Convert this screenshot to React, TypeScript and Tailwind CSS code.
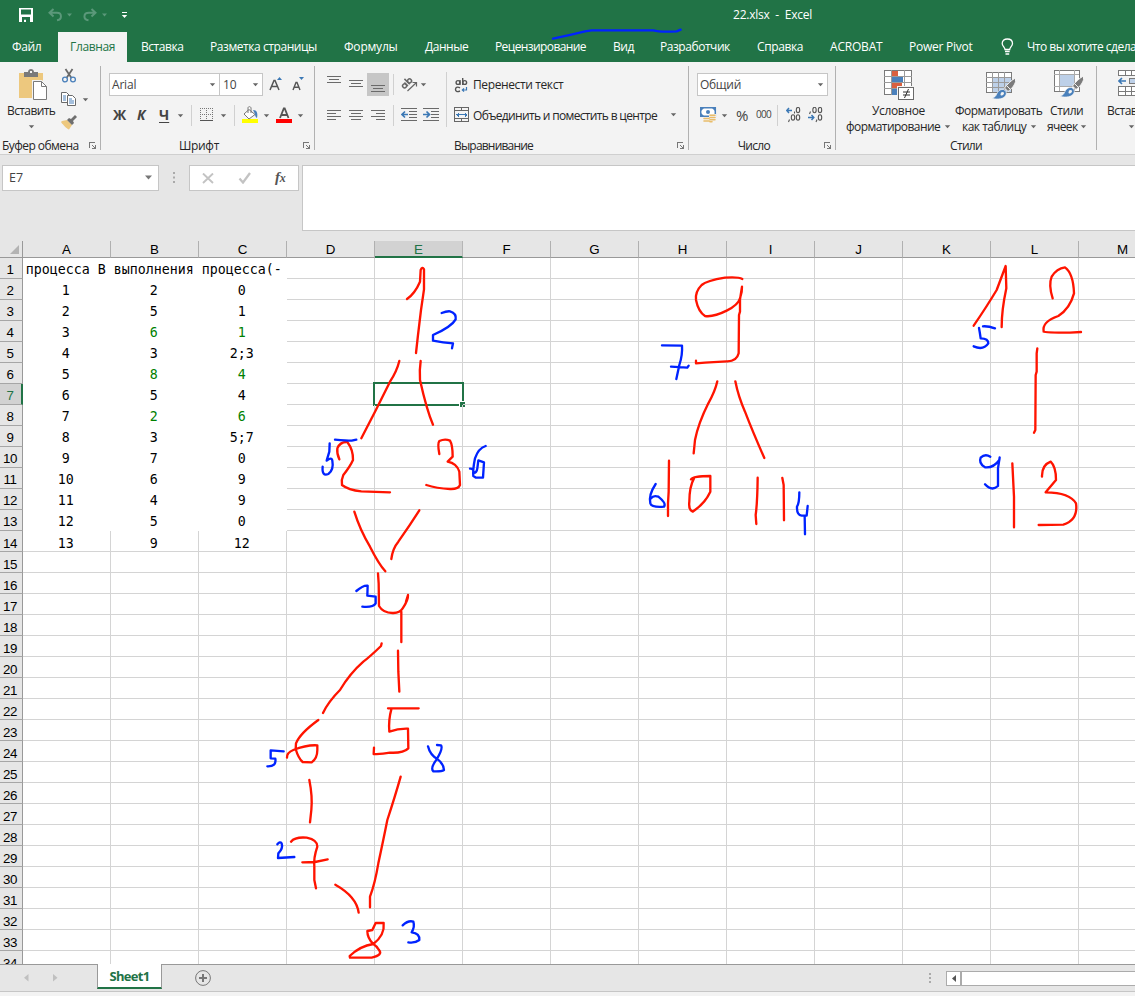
import React from "react";

const COLS = ["A", "B", "C", "D", "E", "F", "G", "H", "I", "J", "K", "L", "M"];

const DATA: string[][] = [
  ["процесса В", "выполнения", "процесса(-"],
  ["1", "2", "0"],
  ["2", "5", "1"],
  ["3", "6", "1"],
  ["4", "3", "2;3"],
  ["5", "8", "4"],
  ["6", "5", "4"],
  ["7", "2", "6"],
  ["8", "3", "5;7"],
  ["9", "7", "0"],
  ["10", "6", "9"],
  ["11", "4", "9"],
  ["12", "5", "0"],
  ["13", "9", "12"],
];

const GREEN_ROWS = [4, 6, 8];

const Caret = ({ className = "" }: { className?: string }) => (
  <svg width="7" height="4" viewBox="0 0 7 4" className={`shrink-0 ${className}`}>
    <path d="M.8 .3h5.4L3.5 3.3z" fill="#666" />
  </svg>
);

const Launcher = () => (
  <svg width="8" height="8" viewBox="0 0 8 8" className="shrink-0" shapeRendering="crispEdges">
    <path d="M.5 6V.5H6" fill="none" stroke="#777" />
    <path d="M3 3h1v1h1v1h1V3h1v4H3V6h2V5H4V4H3z" fill="#777" />
  </svg>
);

const GroupLine = () => <div className="mt-1 h-[84px] w-px shrink-0 bg-[#b1b1b1]" />;

const Tick = ({ className = "" }: { className?: string }) => (
  <div className={`h-[21px] w-px shrink-0 bg-[#d0d0d0] ${className}`} />
);

const Lines = ({ kind, rows }: { kind: "l" | "c" | "r"; rows: number }) => {
  const short = kind === "l" ? "M0 3.5h9" : kind === "r" ? "M5 3.5h9" : "M2 3.5h10";
  const short2 = kind === "l" ? "M0 9.500h9" : kind === "r" ? "M5 9.500h9" : "M2 9.500h10";
  return (
    <svg width="14" height="10" viewBox="0 0 14 10" shapeRendering="crispEdges" className="shrink-0" fill="none" stroke="#6a6a6a">
      <path d="M0 .5h14M0 6.500h14" />
      <path d={short} />
      {rows === 4 && <path d={short2} />}
    </svg>
  );
};

const Indent = ({ right }: { right?: boolean }) => (
  <svg width="17" height="13" viewBox="0 0 17 13" className="shrink-0" fill="none">
    <path d="M0 .5h16M8 3.500h8M8 6.500h8M8 9.500h8M0 12.500h16" stroke="#6a6a6a" shapeRendering="crispEdges" />
    {right ? (
      <path d="M0 6.500h6M3.500 3.500l3 3-3 3" stroke="#3b78b5" strokeWidth="1.700" />
    ) : (
      <path d="M7 6.500H1M4 3.500l-3 3 3 3" stroke="#3b78b5" strokeWidth="1.700" />
    )}
  </svg>
);

const Brush = () => (
  <>
    <path d="M29.500 8c-4 2-9 7-11 10l3.500 3.500c4-3 7-7 7.500-10z" fill="#7b7b7b" stroke="#f3f3f3" />
    <path d="M20.500 15.500l4 4" stroke="#f3f3f3" strokeWidth="1" />
    <path d="M17.500 19.500c-4-.5-6 2.500-7 5-.6 1.500-2 3-4.500 3.700 6 1.800 12 .8 14-3.200 1-2.500-.3-4.700-2.500-5.500z" fill="#4a80bb" stroke="#f3f3f3" strokeWidth=".7" />
    <path d="M15 22.500c2-1.500 4 0 2.500 2-1 1.300-3 1.500-3 0z" fill="#f3f3f3" />
  </>
);

function TitleBar() {
  return (
    <div className="flex h-8 items-center text-[12px] text-white">
      <svg width="14" height="14" viewBox="0 0 14 14" className="ml-[19px] mt-[-2px]">
        <path fillRule="evenodd" fill="#fff" d="M0 0h14v14H0zM2 1.500v5h10v-5zM3 9v5h2v-2.300h2V14h4V9z" />
      </svg>
      <svg width="24" height="14" viewBox="0 0 24 14" className="ml-[15px] mt-[-2px]" fill="none" stroke="#5b987a" strokeWidth="2">
        <path d="M5.500 1L1.500 4.800l4 3.700M1.500 4.800H9c5 0 5.500 6.500 0 7.500" />
        <path d="M19 5.500h5l-2.500 3z" fill="#5b987a" stroke="none" />
      </svg>
      <svg width="24" height="14" viewBox="0 0 24 14" className="ml-[11px] mt-[-2px]" fill="none" stroke="#5b987a" strokeWidth="2">
        <path d="M8.500 1l4 3.800-4 3.700M12.500 4.800H6C0 4.800 0 11.500 5.500 12.300" />
        <path d="M19 5.500h5l-2.500 3z" fill="#5b987a" stroke="none" />
      </svg>
      <svg width="7" height="8" viewBox="0 0 7 8" className="ml-[14px] mt-[-1px]">
        <path d="M1 .5h5" stroke="#fff" />
        <path d="M.8 3h5.400L3.500 6z" fill="#fff" />
      </svg>
      <span className="ml-[605px] whitespace-pre pb-[2px] text-[12px] tracking-[-0.23px]">22.xlsx  -  Excel</span>
    </div>
  );
}

const TABS: [string, string, string][] = [
  ["Файл", "w-[58px] pl-3 tracking-[-0.4px]", "text-white"],
  ["Главная", "w-[69px] pl-3 bg-[#f3f3f3] tracking-[-0.35px]", "text-[#217346]"],
  ["Вставка", "w-[69px] pl-[14px] tracking-[-0.45px]", "text-white"],
  ["Разметка страницы", "w-[134px] pl-[14px] tracking-[-0.43px]", "text-white"],
  ["Формулы", "w-[80px] pl-[14px] tracking-[-0.2px]", "text-white"],
  ["Данные", "w-[71px] pl-[15px] tracking-[-0.45px]", "text-white"],
  ["Рецензирование", "w-[118px] pl-[14px] tracking-[-0.6px]", "text-white"],
  ["Вид", "w-[47px] pl-[14px] tracking-[-0.4px]", "text-white"],
  ["Разработчик", "w-[97px] pl-[14px] tracking-[-0.45px]", "text-white"],
  ["Справка", "w-[73px] pl-[14px] tracking-[-0.4px]", "text-white"],
  ["ACROBAT", "w-[79px] pl-[14px] tracking-[-0.2px]", "text-white"],
  ["Power Pivot", "w-[106px] pl-[14px] tracking-[-0.25px]", "text-white"],
];

function Tabs() {
  return (
    <div className="flex h-[30px] text-[12px]">
      {TABS.map(([t, box, color]) => (
        <div key={t} className={`flex shrink-0 items-center whitespace-nowrap ${box} ${color}`}>
          {t}
        </div>
      ))}
      <svg width="13" height="18" viewBox="0 0 13 18" className="mt-[6px] shrink-0" fill="none" stroke="#fff">
        <path d="M4 11.500c0-2-2.800-3.300-2.800-6C1.200 2.500 3.500 1 6.300 1s5.200 1.500 5.200 4.500c0 2.700-2.800 4-2.800 6zM4 13.500h4.700M4.500 16h3.700" strokeWidth="1.300" />
      </svg>
      <span className="ml-[13px] flex shrink-0 items-center whitespace-nowrap tracking-[-0.5px] text-white">Что вы хотите сделать?</span>
    </div>
  );
}

function Clipboard() {
  return (
    <div className="w-[100px] shrink-0">
      <div className="flex h-[75px]">
        <div className="flex w-[60px] shrink-0 flex-col pt-[7px]">
          <svg width="30" height="32" viewBox="0 0 30 32" className="ml-[19px]">
            <path d="M0 4h24v25H0z" fill="#edc87e" />
            <path d="M5 3h4c0-4 6-4 6 0h4v5H5z" fill="#7a7a7a" />
            <path d="M11 2h2v2h-2z" fill="#f3f3f3" />
            <path d="M13 11h10l6 6v15H13z" fill="#f3f3f3" />
            <path d="M14.500 12.500h8l5 5v13h-13z" fill="#fff" stroke="#7a7a7a" />
            <path d="M22.500 12.500v5h5" fill="none" stroke="#7a7a7a" />
          </svg>
          <span className="ml-[7px] mt-[2px] whitespace-nowrap leading-4 tracking-[-0.6px]">Вставить</span>
          <Caret className="ml-7 mt-[6px]" />
        </div>
        <div className="flex flex-col pt-[6px]">
          <svg width="16" height="15" viewBox="0 0 16 15" className="ml-[1px]">
            <path d="M4.500 1l6 9M11.500 1l-6 9" stroke="#6a6a6a" strokeWidth="1.800" />
            <circle cx="4" cy="11.500" r="2.400" fill="none" stroke="#4a80bb" strokeWidth="1.300" />
            <circle cx="12" cy="11.500" r="2.400" fill="none" stroke="#4a80bb" strokeWidth="1.300" />
          </svg>
          <div className="mt-[9px] flex items-center">
            <svg width="17" height="15" viewBox="0 0 17 15" fill="#fff" stroke="#6a6a6a">
              <path d="M1.500 .5h5l3 3v7h-8z" />
              <path d="M3 4h3M3 6h3M3 8h3" stroke="#4a80bb" />
              <path d="M7.500 3.500h5l3 3v7h-8z" />
              <path d="M9 7h3M9 9h5M9 11h5" stroke="#4a80bb" />
            </svg>
            <Caret className="ml-[5px]" />
          </div>
          <svg width="17" height="15" viewBox="0 0 17 15" className="mt-2">
            <path d="M2 6l5-1 5 5-3 4.500C7 14 3 10 1 7z" fill="#edc87e" />
            <path d="M7 5l2-2 2 1 4-4 2 2-4 4 1 2-2 2z" fill="#6f6f6f" />
          </svg>
        </div>
      </div>
      <div className="flex h-[18px] items-center justify-between pl-[2px] pr-[3px]">
        <span className="whitespace-nowrap tracking-[-0.55px]">Буфер обмена</span>
        <Launcher />
      </div>
    </div>
  );
}

function FontGroup() {
  return (
    <div className="w-[213px] shrink-0">
      <div className="flex h-[34px] pl-2 pt-[11px]">
        <div className="flex h-[23px] w-[111px] shrink-0 items-center justify-between border border-[#c6c6c6] bg-white pl-[2px] pr-[3px] tracking-[-0.2px] text-[#444]">
          Arial
          <Caret />
        </div>
        <div className="flex h-[23px] w-[43px] shrink-0 items-center justify-between border border-l-0 border-[#c6c6c6] bg-white pl-[3px] pr-[3px] text-[#444]">
          10
          <Caret />
        </div>
        <svg width="36" height="22" viewBox="0 0 36 22" className="ml-[6px] mt-px">
          <path d="M1 16L5 6.500h1L10 16M2.500 12.500h6" fill="none" stroke="#555" strokeWidth="1.500" />
          <path d="M8 6h5l-2.500-3z" fill="#3b78b5" />
          <path d="M24 16l3-7.500h1L31 16M25 13.300h5" fill="none" stroke="#555" strokeWidth="1.400" />
          <path d="M30 3h5l-2.500 3z" fill="#3b78b5" />
        </svg>
      </div>
      <div className="mt-[9px] flex h-8 items-start">
        <div className="flex h-[21px] items-center text-[14px] font-bold leading-5 text-[#444]">
          <span className="-mt-[2px] ml-3 w-6">Ж</span>
          <span className="-mt-[2px] w-[22px] italic">К</span>
          <span className="-mt-[2px] w-[18px] underline underline-offset-2">Ч</span>
          <Caret />
          <Tick className="ml-[7px]" />
        </div>
        <svg width="14" height="14" viewBox="0 0 14 14" className="ml-2 mt-[3px]" stroke="#777" shapeRendering="crispEdges">
          <path d="M0 .5h13M0 6.500h13M.5 0v12M6.500 0v12M12.500 0v12" strokeDasharray="1 1" />
          <path d="M0 12.500h13" stroke="#555" />
        </svg>
        <Caret className="ml-[6px] mt-[9px]" />
        <Tick className="ml-[7px]" />
        <svg width="17" height="18" viewBox="0 0 17 18" className="ml-[7px] mt-px">
          <path d="M0 13h16v4H0z" fill="#ff0" />
          <path d="M7 3.500l6 5-6 4.500-5-5zM6 7V2c0-2 3-1.500 3 0v5" fill="#fff" stroke="#777" />
          <path d="M11 4c4 0 5 3 4 8-2-1-2-4-2-4z" fill="#4a80bb" />
        </svg>
        <Caret className="ml-1 mt-[9px]" />
        <svg width="17" height="18" viewBox="0 0 17 18" className="ml-[6px] mt-px">
          <path d="M0 13h16v4H0z" fill="#f00" />
          <path d="M4 12L7.800 2.500h.9l3.800 9.500M5.500 9h5.500" fill="none" stroke="#555" strokeWidth="1.800" />
        </svg>
        <Caret className="ml-1 mt-[9px]" />
      </div>
      <div className="flex h-[18px] items-center justify-end pr-[3px]">
        <span className="mr-[84px] whitespace-nowrap tracking-[-0.3px]">Шрифт</span>
        <Launcher />
      </div>
    </div>
  );
}

function AlignGroup() {
  return (
    <div className="w-[373px] shrink-0">
      <div className="flex h-[75px]">
        <div className="w-[131px] shrink-0">
          <div className="flex h-[34px] items-start pt-[11px]">
            <div className="ml-3 mt-[3px]"><Lines kind="c" rows={3} /></div>
            <div className="ml-2 mt-[7px]"><Lines kind="c" rows={3} /></div>
            <div className="ml-1 flex h-[23px] w-[22px] justify-center bg-[#c6c6c6] pt-3"><Lines kind="c" rows={3} /></div>
            <Tick className="ml-1 mt-px" />
            <svg width="17" height="16" viewBox="0 0 17 16" className="ml-[7px] mt-[3px]" fill="none" stroke="#666">
              <g strokeWidth="1.500" transform="rotate(-45 5 7)">
                <circle cx="2" cy="8" r="2" />
                <path d="M4.300 5.500v5M6.800 3v7.500" />
                <circle cx="9" cy="8" r="2" />
              </g>
              <path d="M6.500 15l9-8.500M11.500 6.500h4v4" strokeWidth="1.200" />
            </svg>
            <Caret className="ml-[2px] mt-[10px]" />
          </div>
          <div className="flex items-start pt-[9px]">
            <div className="ml-3 mt-[5px]"><Lines kind="l" rows={4} /></div>
            <div className="ml-2 mt-[5px]"><Lines kind="c" rows={4} /></div>
            <div className="ml-2 mt-[5px]"><Lines kind="r" rows={4} /></div>
            <Tick className="ml-2" />
            <div className="ml-[7px] mt-[3px] flex gap-[5px]"><Indent /><Indent right /></div>
          </div>
        </div>
        <div className="mt-[10px] h-[55px] w-px shrink-0 bg-[#d0d0d0]" />
        <div className="pl-[7px]">
          <div className="mt-[12px] flex h-[22px] items-center">
            <svg width="15" height="16" viewBox="0 0 15 16" fill="none" stroke="#555" strokeWidth="1.400">
              <circle cx="4" cy="5.500" r="1.900" /><path d="M6 3v5M8.700 1v7" /><circle cx="10.700" cy="5.500" r="1.900" />
              <path d="M6 10.800c-3-1.500-4.500 0-4.500 1.700S3 15.300 6 14" />
              <path d="M12.500 10v3H8.500M10 11.300L8.300 13l1.700 1.700" stroke="#3b78b5" strokeWidth="1.200" />
            </svg>
            <span className="ml-1 whitespace-nowrap tracking-[-0.38px]">Перенести текст</span>
          </div>
          <div className="mt-[8px] flex h-[22px] items-center">
            <svg width="16" height="16" viewBox="0 0 16 16" fill="none" stroke="#666" shapeRendering="crispEdges" className="shrink-0">
              <path d="M.5 .5h14v14H.5zM0 3.500h15M0 11.500h15M7.500 0v3M7.500 12v3" />
              <path d="M2 7.500h11M4 5.500v4M11 5.500v4M3 6.500v2M12 6.500v2" stroke="#3b78b5" />
            </svg>
            <span className="ml-[3px] w-[197px] shrink-0 whitespace-nowrap pt-[2px] tracking-[-0.66px]">Объединить и поместить в центре</span>
            <Caret />
          </div>
        </div>
      </div>
      <div className="flex h-[18px] items-center justify-end pr-[3px]">
        <span className="mr-[144px] whitespace-nowrap tracking-[-0.8px]">Выравнивание</span>
        <Launcher />
      </div>
    </div>
  );
}

function NumberGroup() {
  return (
    <div className="w-[146px] shrink-0">
      <div className="flex h-[34px] pl-2 pt-[11px]">
        <div className="flex h-[23px] w-[131px] items-center justify-between border border-[#c6c6c6] bg-white pl-[2px] pr-[3px] tracking-[-0.3px] text-[#444]">
          Общий
          <Caret />
        </div>
      </div>
      <div className="mt-[9px] flex h-8 items-start">
        <svg width="17" height="16" viewBox="0 0 17 16" className="ml-[11px] mt-[2px]">
          <path d="M.7 .7h14.600v8.600H.7z" fill="#fff" stroke="#4a80bb" strokeWidth="1.500" />
          <path d="M1 1h3L1 4zM15 1h-3l3 3zM1 9h3L1 6z" fill="#4a80bb" />
          <circle cx="8" cy="5" r="2" fill="#4a80bb" />
          <path d="M9 7h7v8H4v-5h5z" fill="#f3f3f3" />
          <path d="M10 8.200h5M10 10.500h5M10 12.800h5M4 11.500h5M4 14h5M10 14.800h2" stroke="#e9bd6b" strokeWidth="1.600" strokeLinecap="round" />
        </svg>
        <Caret className="ml-1 mt-[9px]" />
        <span className="ml-[8px] w-[20px] text-[15px] leading-[20px] text-[#444]">%</span>
        <span className="w-[21px] text-[10px] font-medium leading-[19px] tracking-[-0.7px] text-[#444]">000</span>
        <Tick />
        <svg width="38" height="17" viewBox="0 0 38 17" className="ml-[8px] mt-[2px]" fill="none" stroke="#555" strokeWidth="1.100">
          <path d="M6 3.500H.8M3 1L.7 3.500 3 6" stroke="#3b78b5" strokeWidth="1.500" />
          <path d="M8.500 4.500v2" /><ellipse cx="12" cy="3" rx="1.700" ry="2.700" />
          <path d="M3.500 12.500L2.500 15" /><ellipse cx="7" cy="10.500" rx="1.700" ry="2.700" /><ellipse cx="12" cy="10.500" rx="1.700" ry="2.700" />
          <path d="M24.500 4.500L23.500 7" /><ellipse cx="28.500" cy="3" rx="1.700" ry="2.700" /><ellipse cx="34" cy="3" rx="1.700" ry="2.700" />
          <path d="M22 10.500h5.500M25.500 8l2.300 2.500-2.300 2.500" stroke="#3b78b5" strokeWidth="1.500" />
          <path d="M31 12.500L30 15" /><ellipse cx="34" cy="10.500" rx="1.700" ry="2.700" />
        </svg>
      </div>
      <div className="flex h-[18px] items-center justify-end pr-[3px]">
        <span className="mr-[54px] whitespace-nowrap tracking-[-0.7px]">Число</span>
        <Launcher />
      </div>
    </div>
  );
}

function StylesGroup() {
  return (
    <div className="w-[260px] shrink-0">
      <div className="flex h-[75px] pt-[8px]">
        <div className="ml-[10px] flex w-[110px] flex-col">
          <svg width="31" height="31" viewBox="0 0 31 31" className="ml-[38px]" shapeRendering="crispEdges">
            <path d="M.5 .5h27v24H.5z" fill="#fff" stroke="#7a7a7a" />
            <path d="M8 1h6v6H8zM8 13h10v5H8z" fill="#d9603f" />
            <path d="M8 7h11v5H8zM8 19h5v6H8z" fill="#4a80bb" />
            <path d="M0 6.500h28M0 12.500h28M0 18.500h28M7.500 0v25M20.500 0v25" fill="none" stroke="#9a9a9a" />
            <path d="M13 16h18v15H13z" fill="#f3f3f3" />
            <path d="M14.500 17.500h15v12h-15z" fill="#fff" stroke="#6a6a6a" />
            <path d="M19 22h7M19 25h7M24.500 19l-4 9" fill="none" stroke="#333" shapeRendering="auto" />
          </svg>
          <span className="ml-[26px] mt-[2px] whitespace-nowrap leading-4 tracking-[-0.35px]">Условное</span>
          <div className="flex items-center leading-4"><span className="w-[98px] shrink-0 whitespace-nowrap tracking-[-0.55px]">форматирование</span><Caret /></div>
        </div>
        <div className="-ml-[2px] flex w-[92px] flex-col">
          <svg width="31" height="31" viewBox="0 0 31 31" className="ml-8">
            <g shapeRendering="crispEdges">
              <path d="M.5 2.500h25v20H.5z" fill="#fff" stroke="#7a7a7a" />
              <path d="M7 8h18v14H7z" fill="#bdd0e8" />
              <path d="M0 7.500h25M0 12.500h25M0 17.500h25M6.500 2v20M12.500 2v20M18.500 2v20" fill="none" stroke="#9a9a9a" />
            </g>
            <Brush />
          </svg>
          <span className="ml-[1px] mt-[2px] whitespace-nowrap leading-4 tracking-[-0.5px]">Форматировать</span>
          <div className="ml-[8px] flex items-center leading-4"><span className="w-[68px] shrink-0 whitespace-nowrap tracking-[-0.5px]">как таблицу</span><Caret /></div>
        </div>
        <div className="flex w-[50px] flex-col">
          <svg width="31" height="31" viewBox="0 0 31 31" className="ml-[8px]">
            <g shapeRendering="crispEdges">
              <path d="M.5 .5h25v21H.5z" fill="#fff" stroke="#7a7a7a" />
              <path d="M6 5h14v11H6z" fill="#bdd0e8" />
              <path d="M0 4.500h25M0 16.500h25M5.500 0v21M20.500 0v21" fill="none" stroke="#aaa" />
            </g>
            <g transform="translate(0 -2)"><Brush /></g>
          </svg>
          <span className="ml-1 mt-[2px] whitespace-nowrap leading-4 tracking-[-0.4px]">Стили</span>
          <div className="ml-[1px] flex items-center leading-4"><span className="w-[33px] shrink-0 whitespace-nowrap tracking-[-0.6px]">ячеек</span><Caret /></div>
        </div>
      </div>
      <div className="flex h-[18px] items-center justify-center tracking-[-0.7px]"><span>Стили</span></div>
    </div>
  );
}

function InsertGroup() {
  return (
    <div className="flex w-[80px] shrink-0 flex-col pt-[8px]">
      <svg width="30" height="31" viewBox="0 0 30 31" className="ml-[21px]" shapeRendering="crispEdges">
        <path d="M.5 .5h26v5H.5zM.5 16.500h26v9H.5zM0 21.500h27M7.500 0v5M20.500 0v5M13.500 0v5M7.500 16v10M13.500 16v10" fill="#fff" stroke="#7a7a7a" />
        <path d="M11.500 8.500h15v5h-15z" fill="#bdd0e8" stroke="#7a7a7a" />
        <path d="M8 11H1.500M4 8l-3 3 3 3" fill="none" stroke="#3b78b5" strokeWidth="1.600" shapeRendering="auto" />
      </svg>
      <span className="ml-[10px] mt-[2px] whitespace-nowrap leading-4 tracking-[-0.5px]">Вставить</span>
      <Caret className="ml-[31px] mt-[6px]" />
    </div>
  );
}

function FormulaBar() {
  return (
    <div className="flex h-[86px] bg-[#e6e6e6] pt-[10px] text-[12px] text-[#444]">
      <div className="ml-[2px] flex h-[26px] w-[157px] shrink-0 items-center justify-between border border-[#c6c6c6] bg-white pl-[6px] pr-[5px] text-[12.5px]">
        E7
        <svg width="9" height="5" viewBox="0 0 9 5" className="-mt-[2px]"><path d="M1 .5h7L4.500 4.500z" fill="#777" /></svg>
      </div>
      <svg width="2" height="12" viewBox="0 0 2 12" className="ml-[14px] mt-[7px]"><path d="M0 1h2M0 5.500h2M0 10h2" stroke="#aaa" strokeWidth="2" /></svg>
      <div className="ml-[14px] flex h-[26px] w-[110px] shrink-0 items-center border border-[#c6c6c6] bg-white">
        <svg width="12" height="11" viewBox="0 0 12 11" className="ml-3"><path d="M1 .5l10 9.500M11 .5L1 10" stroke="#c3c3c3" strokeWidth="1.900" /></svg>
        <svg width="14" height="12" viewBox="0 0 14 12" className="ml-6"><path d="M1.500 6.500L5 10.500 12 1" fill="none" stroke="#c3c3c3" strokeWidth="2.300" /></svg>
        <span className="ml-[23px] pb-[2px] font-['Liberation_Serif',serif] text-[15px] font-bold italic leading-4 tracking-[-0.2px] text-[#555]">f<span className="text-[12px]">x</span></span>
      </div>
      <div className="ml-[3px] h-[66px] flex-1 border border-r-0 border-[#c6c6c6] bg-white" />
    </div>
  );
}

function Sheet() {
  return (
    <div className="h-[723px] w-full overflow-hidden bg-white font-['Liberation_Sans',Arial,sans-serif] text-[13.33px] text-black">
      <div className="flex h-[17px] w-[1167px] bg-[#e6e6e6]">
        <div className="flex h-[17px] w-[23px] items-end justify-end border-b border-r border-[#999] pb-[3px] pr-[3px]">
          <svg width="9" height="9" viewBox="0 0 9 9"><path d="M9 0v9H0z" fill="#b3b3b3" /></svg>
        </div>
        {COLS.map((c) =>
          c === "E" ? (
            <div key={c} className="flex h-[17px] w-[88px] items-center justify-center border-b-2 border-r border-b-[#217346] border-r-[#b5b5b5] bg-[#d2d2d2] pt-[2px] text-[#217346]">{c}</div>
          ) : (
            <div key={c} className="flex h-[17px] w-[88px] items-center justify-center border-b border-r border-b-[#999] border-r-[#b0b0b0] pt-px">{c}</div>
          )
        )}
      </div>
      {Array.from({ length: 34 }, (_, i) => i + 1).map((r) => (
        <div key={r} className="flex h-[21px] w-[1167px]">
          <div className={`flex w-[23px] items-center justify-center border-b border-b-[#a6a6a6] tracking-[-0.3px] ${r === 7
            ? "border-r-2 border-r-[#217346] bg-[#d2d2d2] pr-[1px] text-[#217346]"
            : "border-r border-r-[#999] bg-[#e6e6e6] pr-[2px]"} ${r >= 14 ? "pt-[5px]" : "pt-[3px]"}`}>
            {r}
          </div>
          {COLS.map((c, ci) => {
            const value = ci < 3 && r <= 14 ? DATA[r - 1][ci] : "";
            const green = ci > 0 && GREEN_ROWS.includes(r);
            const filled = ci < 3 && r <= 13;
            return (
              <div
                key={c}
                className={`relative flex w-[88px] shrink-0 items-center justify-center whitespace-pre border-b border-r pr-[1.5px] font-['DejaVu_Sans_Mono',monospace] text-[13.3px] leading-5 ${filled ? "border-white" : "border-[#d4d4d4]"} ${green ? "text-[#008000]" : "text-black"} ${r === 14 ? "pt-[5px]" : "pt-[4px]"}`}
              >
                {value}
                {c === "E" && r === 7 && (
                  <div className="absolute -left-[2px] -top-[2px] h-6 w-[91px] border-2 border-[#217346]">
                    <div className="absolute -bottom-[3px] -right-[3px] size-[6px] border-l border-t border-white bg-[#217346]" />
                  </div>
                )}
              </div>
            );
          })}
        </div>
      ))}
    </div>
  );
}

function SheetTabs() {
  return (
    <div className="flex h-7 items-start border-b border-t border-b-[#c6c6c6] border-t-[#999] bg-[#e6e6e6]">
      <svg width="34" height="8" viewBox="0 0 34 8" className="ml-6 mt-[9px]" fill="#c0c0c0"><path d="M4.500 0v7.500L0 3.800zM29 0v7.500l4.500-3.700z" /></svg>
      <div className="-mt-px ml-[39px] flex h-[25px] w-[65px] items-center justify-center border-x border-b-2 border-x-[#999] border-b-[#217346] bg-white pt-[3px] text-[13px] font-bold tracking-[-0.7px] text-[#217346]">
        Sheet1
      </div>
      <svg width="17" height="17" viewBox="0 0 17 17" className="ml-[33px] mt-[5px]" fill="none" stroke="#777">
        <circle cx="8" cy="8" r="7.400" />
        <path d="M4 8h8M8 4v8" strokeWidth="2" />
      </svg>
      <svg width="2" height="11" viewBox="0 0 2 11" className="ml-[717px] mt-[8px]"><path d="M0 1h2M0 5h2M0 9h2" stroke="#aaa" strokeWidth="2" /></svg>
      <div className="ml-[15px] mt-[6px] flex h-[15px] flex-1 border-y border-l border-[#ababab] bg-white">
        <div className="flex w-[15px] items-center justify-center border-r-2 border-[#ababab]">
          <svg width="4" height="7" viewBox="0 0 4 7"><path d="M4 0v7L0 3.500z" fill="#555" /></svg>
        </div>
      </div>
    </div>
  );
}

const RED = "#ff1400";
const BLUE = "#0023ff";

const INK: { at: string; red: string[]; blue: string[] }[] = [
  { at: "translate(310 0) scale(.33333)", red: [], blue: ["M729 116Q780 105 825 94L845 91L1030 91Q1050 97 1100 94L1112 89"] },
  {
    at: "translate(260 230) scale(.33333)",
    red: [
      "M441 207Q465 190 480 155L482 120Q487 108 492 118L492 178L483 240L474 315L468 369",
      "M418 393Q410 425 390 455L345 545L304 625",
      "M482 393Q478 420 480 450Q500 540 519 584",
      "M238 688Q230 670 232 655Q240 635 262 636Q280 660 279 690Q270 710 250 735Q243 750 246 765Q265 780 304 784L390 787",
      "M538 672Q532 640 538 633Q555 625 570 632Q578 645 578 680L563 695Q590 700 598 725L600 765Q595 778 570 777Q530 775 499 765",
    ],
    blue: [
      "M545 249Q560 243 570 244Q590 250 587 268Q575 290 519 315L519 332Q550 338 579 340L576 355",
      "M225 629Q260 632 275 632L289 629",
      "M209 640L208 665Q202 685 200 692Q215 680 217 692Q222 720 205 732Q185 740 188 710",
      "M677 648Q655 655 645 685Q638 720 640 738L648 743L669 743L672 697L655 691L652 715Q650 730 640 728Q642 715 630 716",
    ],
  },
  {
    at: "translate(250 500) scale(.33333)",
    red: [
      "M313 35Q330 90 360 140Q385 190 406 214",
      "M508 31Q480 75 445 125Q428 145 424 177",
      "M384 220L386 250L387 318Q400 340 430 339Q450 338 458 325Q475 300 474 285L468 305M454 335L454 426",
      "M395 430L393 438Q360 470 340 485Q300 520 270 570Q235 605 219 639",
      "M444 452L445 515L448 575",
    ],
    blue: ["M319 273Q340 255 353 257L352 287L377 290L377 310Q370 323 337 320"],
  },
  {
    at: "translate(250 700) scale(.33333)",
    red: [
      "M205 60Q150 100 138 130L137 147Q145 175 158 186L185 187Q202 175 202 150L202 136Q170 134 130 150Q110 158 111 173",
      "M414 25L506 25M424 28Q415 60 418 95Q445 85 474 86L475 145Q460 160 420 158Q395 163 371 162L372 143",
      "M178 240Q188 290 184 330L180 367",
      "M452 230Q435 290 412 360Q400 420 385 490Q375 550 360 590L360 622",
      "M123 425Q135 410 170 413Q203 420 202 440Q190 475 193 500L193 540L198 565M157 487L195 486L233 478",
      "M256 554Q320 590 326 638",
      "M401 669L377 669L367 690L352 693Q352 715 370 732Q405 705 401 669M370 732Q330 738 299 768L300 773L365 773Q400 765 387 750Q380 738 370 732",
    ],
    blue: [
      "M101 154L62 151L62 175L76 176Q80 200 52 199",
      "M534 139Q540 165 563 178Q580 190 582 210Q575 215 550 214Q540 205 560 178Q580 145 573 136L561 135",
      "M82 433Q90 423 95 430Q100 445 85 460L84 474L133 471",
      "M458 676Q475 660 490 665Q495 680 485 697Q510 700 508 720Q495 730 475 727",
    ],
  },
  {
    at: "translate(630 240) scale(.33333)",
    red: [
      "M337 117Q325 110 285 113Q230 122 215 135Q195 155 198 180Q205 215 225 228Q250 232 290 212Q325 195 330 175Q337 155 336 140L330 178L330 215L327 225L326 340Q320 365 290 364L225 368L198 370L198 362",
      "M262 424Q255 455 235 490Q205 550 195 600L191 640",
      "M316 424Q325 470 345 515Q370 580 403 654",
      "M117 662L116 755L114 790L114 828",
      "M183 718Q190 708 241 708L241 755Q225 790 188 815Q175 810 178 785Q178 740 192 715",
      "M383 713Q382 790 377 825L379 852",
      "M457 714L461 735L462 841",
    ],
    blue: [
      "M96 316L156 317Q158 345 148 375L139 417M123 380L172 383L176 377",
      "M77 732Q55 765 61 790Q65 803 102 800Q110 790 85 770Q70 765 63 775",
      "M508 757Q508 790 501 800Q500 825 515 827L530 827L533 798M524 827L525 883",
    ],
  },
  {
    at: "translate(930 230) scale(.33333)",
    red: [
      "M131 287Q170 230 200 180L227 108L229 175Q215 240 215 291",
      "M368 205Q355 165 365 140Q380 115 405 112Q430 130 432 190Q420 235 385 258Q335 275 341 305Q345 308 420 308L453 306",
      "M322 355L320 370L320 425L317 435L316 600L312 608",
      "M247 700Q250 760 252 800L252 892",
      "M336 740Q335 705 362 695Q378 710 378 750L347 787Q420 788 438 820Q445 870 400 884L326 885",
    ],
    blue: [
      "M159 289Q175 288 195 295M147 294Q150 310 152 325Q175 325 175 340Q160 362 131 349",
      "M181 680Q165 670 152 683Q145 700 165 712Q190 715 208 690L209 682L204 715L204 768Q185 785 165 763",
    ],
  },
];

const Ink = () => (
  <svg width="1135" height="996" viewBox="0 0 1135 996" className="pointer-events-none absolute left-0 top-0" fill="none" strokeWidth="7" strokeLinecap="round" strokeLinejoin="round">
    {INK.map((g) => (
      <g key={g.at} transform={g.at}>
        {g.red.map((d) => <path key={d} d={d} stroke={RED} />)}
        {g.blue.map((d) => <path key={d} d={d} stroke={BLUE} />)}
      </g>
    ))}
  </svg>
);

export default function App() {
  return (
    <div className="relative h-[996px] w-[1135px] overflow-hidden bg-[#f3f3f3] font-['Open_Sans','Noto_Sans',sans-serif]">
      <div className="bg-[#217346]">
        <TitleBar />
        <Tabs />
      </div>
      <div className="flex h-[93px] overflow-hidden border-b border-[#cfcfcf] bg-[#f3f3f3] text-[12px] text-[#262626]">
        <Clipboard />
        <GroupLine />
        <FontGroup />
        <GroupLine />
        <AlignGroup />
        <GroupLine />
        <NumberGroup />
        <GroupLine />
        <StylesGroup />
        <GroupLine />
        <InsertGroup />
      </div>
      <FormulaBar />
      <Sheet />
      <SheetTabs />
      <Ink />
    </div>
  );
}
